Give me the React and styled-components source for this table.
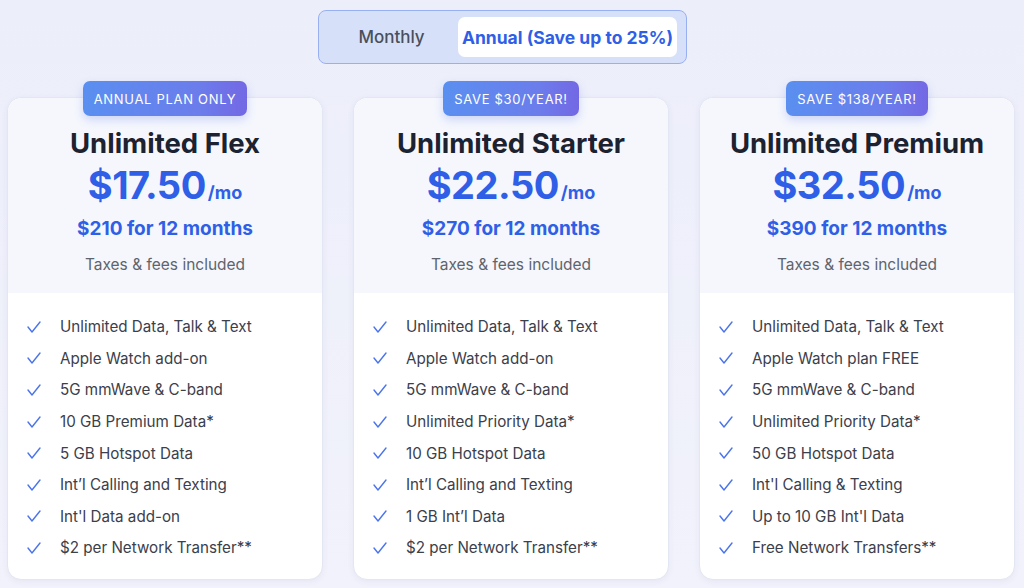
import React from "react";
import styled, { createGlobalStyle } from "styled-components";

const Global = createGlobalStyle`
  body {
    margin: 0;
    background: #eef0fa;
    font-family: Inter, "Noto Sans", sans-serif;
  }
`;

const Page = styled.div`
  width: 1024px;
  height: 588px;
  box-sizing: border-box;
  padding-top: 10px;
  display: flex;
  flex-direction: column;
  align-items: flex-start;
  background: linear-gradient(180deg, #eceefa 0%, #f1f2fb 100%);
  overflow: hidden;
`;

const Toggle = styled.div`
  margin-left: 318px;
  width: 369px;
  height: 54px;
  box-sizing: border-box;
  border: 1px solid #98aff2;
  border-radius: 8px;
  background: #d6e1f9;
  display: flex;
  align-items: center;
  padding: 0 9px 0 6px;
`;

const ToggleOption = styled.div`
  height: 40px;
  display: flex;
  align-items: center;
  justify-content: center;
  border-radius: 7px;
  font-size: ${(p) => (p.$active ? "17.5px" : "17px")};
  font-weight: ${(p) => (p.$active ? 700 : 500)};
  color: ${(p) => (p.$active ? "#2f5fe6" : "#4a4f5b")};
  background: ${(p) => (p.$active ? "#ffffff" : "transparent")};
  flex: ${(p) => (p.$active ? "0 0 219px" : "1")};
`;

const Cards = styled.div`
  margin: 33px 0 0 7px;
  display: flex;
  gap: 30px;
`;

const Card = styled.div`
  width: 316px;
  height: 483px;
  box-sizing: border-box;
  border: 1px solid #e3e6f3;
  border-radius: 14px;
  background: #ffffff;
  box-shadow: 0 2px 6px rgba(60, 70, 120, 0.06);
  display: flex;
  flex-direction: column;
`;

const Head = styled.div`
  height: 195px;
  border-radius: 14px 14px 0 0;
  background: #f5f7fd;
  display: flex;
  flex-direction: column;
  align-items: center;
`;

const Badge = styled.div`
  margin-top: -17px;
  height: 35px;
  padding: 0 11px;
  border-radius: 7px;
  background: linear-gradient(90deg, #5a8ff0 0%, #6b7deb 70%, #7368e4 100%);
  box-shadow: 0 4px 8px rgba(90, 120, 230, 0.25);
  color: #ffffff;
  font-size: 13px;
  letter-spacing: 0.7px;
  display: flex;
  align-items: center;
`;

const Title = styled.div`
  margin-top: 11px;
  font-size: 27.5px;
  line-height: 32px;
  font-weight: 700;
  color: #1c2230;
`;

const Price = styled.div`
  margin-top: 4px;
  display: flex;
  align-items: baseline;
  color: #2f5fe6;
  font-weight: 700;
`;

const Amount = styled.span`
  font-size: 38px;
  line-height: 44px;
  letter-spacing: -0.5px;
`;

const Per = styled.span`
  font-size: 18px;
  margin-left: 2px;
`;

const Yearly = styled.div`
  margin-top: 9px;
  font-size: 19px;
  line-height: 26px;
  font-weight: 700;
  color: #2f5fe6;
`;

const Note = styled.div`
  margin-top: 13px;
  font-size: 15.5px;
  line-height: 20px;
  color: #5f636c;
`;

const List = styled.ul`
  list-style: none;
  margin: 0;
  padding: 18px 0 0 19px;
  display: flex;
  flex-direction: column;
`;

const Item = styled.li`
  height: 31.6px;
  display: flex;
  align-items: center;
  gap: 19px;
  font-size: 15.2px;
  color: #3b404b;
`;

const Check = () => (
  <svg width="14" height="12" viewBox="0 0 14 12">
    <polyline
      points="1,6 5,11 13,1"
      fill="none"
      stroke="#4a74ee"
      strokeWidth="1.4"
      strokeLinecap="round"
      strokeLinejoin="round"
    />
  </svg>
);

const plans = [
  {
    badge: "ANNUAL PLAN ONLY",
    name: "Unlimited Flex",
    price: "$17.50",
    total: "$210 for 12 months",
    features: [
      "Unlimited Data, Talk & Text",
      "Apple Watch add-on",
      "5G mmWave & C-band",
      "10 GB Premium Data*",
      "5 GB Hotspot Data",
      "Int’l Calling and Texting",
      "Int'l Data add-on",
      "$2 per Network Transfer**",
    ],
  },
  {
    badge: "SAVE $30/YEAR!",
    name: "Unlimited Starter",
    price: "$22.50",
    total: "$270 for 12 months",
    features: [
      "Unlimited Data, Talk & Text",
      "Apple Watch add-on",
      "5G mmWave & C-band",
      "Unlimited Priority Data*",
      "10 GB Hotspot Data",
      "Int’l Calling and Texting",
      "1 GB Int’l Data",
      "$2 per Network Transfer**",
    ],
  },
  {
    badge: "SAVE $138/YEAR!",
    name: "Unlimited Premium",
    price: "$32.50",
    total: "$390 for 12 months",
    features: [
      "Unlimited Data, Talk & Text",
      "Apple Watch plan FREE",
      "5G mmWave & C-band",
      "Unlimited Priority Data*",
      "50 GB Hotspot Data",
      "Int'l Calling & Texting",
      "Up to 10 GB Int'l Data",
      "Free Network Transfers**",
    ],
  },
];

const App = () => {
  return (
    <>
      <Global />
      <Page>
        <Toggle>
          <ToggleOption>Monthly</ToggleOption>
          <ToggleOption $active>Annual (Save up to 25%)</ToggleOption>
        </Toggle>
        <Cards>
          {plans.map((plan, key) => (
            <Card key={key}>
              <Head>
                <Badge>{plan.badge}</Badge>
                <Title>{plan.name}</Title>
                <Price>
                  <Amount>{plan.price}</Amount>
                  <Per>/mo</Per>
                </Price>
                <Yearly>{plan.total}</Yearly>
                <Note>Taxes &amp; fees included</Note>
              </Head>
              <List>
                {plan.features.map((f, i) => (
                  <Item key={i}>
                    <Check />
                    {f}
                  </Item>
                ))}
              </List>
            </Card>
          ))}
        </Cards>
      </Page>
    </>
  );
};

export default App;
